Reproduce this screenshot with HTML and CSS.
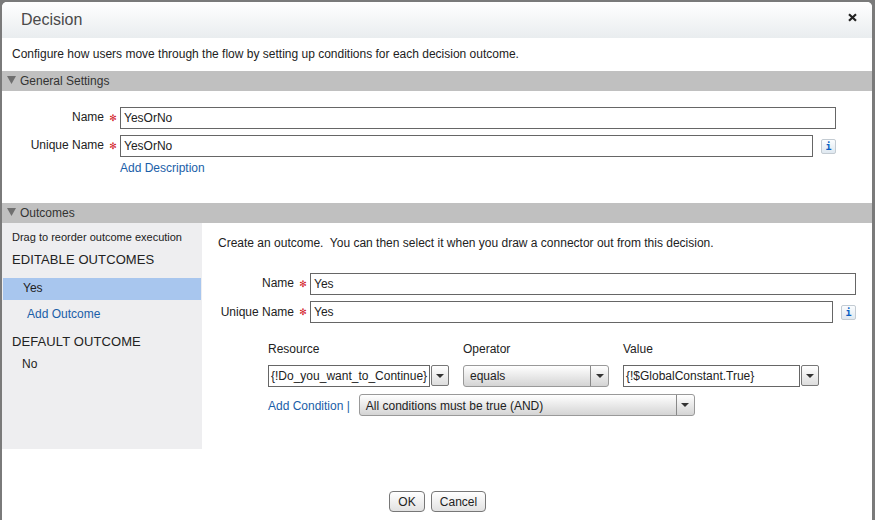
FILE: index.html
```html
<!DOCTYPE html>
<html lang="en">
<head>
<meta charset="utf-8">
<title>Decision</title>
<link rel="stylesheet" href="styles.css">
</head>
<body>
<div class="dialog">
  <header class="dialog-head">
    <h1 class="dialog-title">Decision</h1>
    <svg class="close" width="9" height="9" viewBox="0 0 9 9"><path d="M1 1.2 8 7.8M8 1.2 1 7.8" stroke="#222" stroke-width="2.2" fill="none"/></svg>
  </header>
  <p class="intro">Configure how users move through the flow by setting up conditions for each decision outcome.</p>

  <div class="section-bar">
    <svg class="twisty" width="9" height="8" viewBox="0 0 9 8"><path d="M0 0H9L4.5 8Z" fill="#6f6f6f"/></svg>
    <span>General Settings</span>
  </div>
  <div class="general">
    <div class="row">
      <span class="label general-label">Name</span><span class="req">✻</span>
      <div class="input w-716">YesOrNo</div>
    </div>
    <div class="row row-second">
      <span class="label general-label">Unique Name</span><span class="req">✻</span>
      <div class="input w-693">YesOrNo</div>
      <span class="info">i</span>
    </div>
    <a class="link add-desc">Add Description</a>
  </div>

  <div class="section-bar">
    <svg class="twisty" width="9" height="8" viewBox="0 0 9 8"><path d="M0 0H9L4.5 8Z" fill="#6f6f6f"/></svg>
    <span>Outcomes</span>
  </div>
  <div class="outcomes">
    <aside class="side">
      <div class="side-hint">Drag to reorder outcome execution</div>
      <div class="side-title">EDITABLE OUTCOMES</div>
      <div class="side-selected">Yes</div>
      <a class="link side-add">Add Outcome</a>
      <div class="side-title side-title-default">DEFAULT OUTCOME</div>
      <div class="side-item">No</div>
    </aside>
    <main class="detail">
      <p class="detail-intro">Create an outcome.&nbsp; You can then select it when you draw a connector out from this decision.</p>
      <div class="row">
        <span class="label detail-label">Name</span><span class="req">✻</span>
        <div class="input w-546">Yes</div>
      </div>
      <div class="row row-detail-second">
        <span class="label detail-label">Unique Name</span><span class="req">✻</span>
        <div class="input w-523">Yes</div>
        <span class="info">i</span>
      </div>
      <div class="condition">
        <div class="col col-resource">
          <div class="col-label">Resource</div>
          <div class="combo">
            <div class="input combo-input w-162">{!Do_you_want_to_Continue}</div>
            <span class="combo-btn"><i class="caret"></i></span>
          </div>
        </div>
        <div class="col col-operator">
          <div class="col-label">Operator</div>
          <div class="select w-146"><span class="select-text">equals</span><span class="select-arrow"><i class="caret"></i></span></div>
        </div>
        <div class="col">
          <div class="col-label">Value</div>
          <div class="combo">
            <div class="input combo-input w-177">{!$GlobalConstant.True}</div>
            <span class="combo-btn"><i class="caret"></i></span>
          </div>
        </div>
      </div>
      <div class="logic">
        <a class="link">Add Condition |</a>
        <div class="select select-logic w-336"><span class="select-text">All conditions must be true (AND)</span><span class="select-arrow"><i class="caret"></i></span></div>
      </div>
    </main>
  </div>
  <footer class="foot">
    <button class="btn btn-ok" type="button">OK</button>
    <button class="btn btn-cancel" type="button">Cancel</button>
  </footer>
</div>
</body>
</html>
```
FILE: styles.css
```css
* { box-sizing: border-box; }
html, body { margin: 0; height: 100%; }
body {
  width: 875px;
  height: 520px;
  overflow: hidden;
  background: #7a7a7a;
  padding: 2px 3px 0 2px;
  font-family: "Liberation Sans", Arial, sans-serif;
  font-size: 12px;
  color: #222;
}
.dialog {
  height: 518px;
  background: #fff;
  border-radius: 5px 5px 0 0;
  display: flex;
  flex-direction: column;
}
.dialog-head {
  height: 36px;
  flex: none;
  display: flex;
  align-items: center;
  justify-content: space-between;
  padding: 0 15px 0 19px;
  background: linear-gradient(#fff, #e9edef);
  border-radius: 5px 5px 0 0;
}
.dialog-title {
  margin: 0;
  font-size: 16px;
  font-weight: 400;
  color: #4a4a4a;
}
.close { margin-top: -6px; }
.intro {
  margin: 0;
  height: 33px;
  padding: 9px 0 0 10px;
  line-height: 15px;
}
.section-bar {
  height: 20px;
  flex: none;
  background: #c0c0c0;
  display: flex;
  align-items: center;
  gap: 4px;
  padding-left: 5px;
  color: #333;
}
.twisty { margin-top: -3px; }
.general { height: 112px; padding-top: 16px; flex: none; }
.row { display: flex; align-items: center; height: 22px; }
.row-second { margin-top: 6px; }
.label { text-align: right; flex: none; }
.general-label { width: 102px; padding-bottom: 3px; }
.row-second .general-label { padding-bottom: 2px; }
.detail-label { width: 76px; padding-bottom: 2px; }
.row-detail-second .detail-label { padding-bottom: 1px; }
.req {
  flex: none;
  width: 16px;
  padding-left: 2px;
  text-align: center;
  color: #d0101a;
  font-family: "DejaVu Sans", sans-serif;
  font-size: 9px;
  line-height: 22px;
}
.input {
  flex: none;
  height: 22px;
  border: 1px solid #666;
  background: #fff;
  padding: 0 3px;
  line-height: 20px;
  font-size: 12px;
  color: #222;
  white-space: nowrap;
  overflow: hidden;
}
.w-716 { width: 716px; }
.w-693 { width: 693px; }
.w-546 { width: 546px; }
.w-523 { width: 523px; }
.w-162 { width: 162px; }
.w-177 { width: 177px; }
.w-146 { width: 146px; }
.w-336 { width: 336px; }
.info {
  flex: none;
  width: 15px;
  height: 15px;
  margin-left: 8px;
  border: 1px solid #c3cbd2;
  border-radius: 2px;
  background: linear-gradient(#fbfdff, #dfe8f0);
  color: #0a5fc4;
  font: 700 10px/13px "DejaVu Sans Mono", monospace;
  text-align: center;
}
.link { color: #1a5ea8; }
.add-desc { display: block; margin: 4px 0 0 118px; line-height: 14px; }
.outcomes { display: flex; flex: 0 0 226px; }
.side {
  width: 200px;
  flex: none;
  background: #eeeef0;
  padding-top: 7px;
}
.side-hint { padding-left: 10px; font-size: 11px; line-height: 14px; }
.side-title {
  padding-left: 10px;
  margin-top: 8px;
  font-size: 13px;
  letter-spacing: .1px;
  line-height: 16px;
  color: #222;
}
.side-selected {
  margin: 10px 1px 0 1px;
  height: 22px;
  background: #a8c6ee;
  padding-left: 20px;
  line-height: 20px;
}
.side-add { display: block; margin: 7px 0 0 25px; line-height: 14px; }
.side-title-default { margin-top: 13px; }
.side-item { padding-left: 20px; margin-top: 7px; line-height: 14px; }
.detail { flex: 1; padding-left: 16px; }
.detail-intro { margin: 0; height: 50px; padding-top: 13px; line-height: 15px; }
.row-detail-second { margin-top: 6px; }
.condition { display: flex; margin: 19px 0 0 50px; }
.col-label { line-height: 14px; margin-bottom: 9px; height: 14px; }
.col-resource { width: 195px; }
.col-operator { width: 160px; }
.combo { display: flex; align-items: flex-start; gap: 1px; }
.combo-input { padding: 0 2px; }
.combo-btn {
  width: 18px;
  height: 21px;
  border: 1px solid #777;
  border-radius: 2px;
  background: linear-gradient(#fff, #ddd);
  display: flex;
  align-items: center;
  justify-content: center;
}
.caret {
  width: 0;
  height: 0;
  border-left: 4px solid transparent;
  border-right: 4px solid transparent;
  border-top: 4px solid #333;
}
.select {
  height: 22px;
  border: 1px solid #999;
  border-radius: 3px;
  background: linear-gradient(#fff, #d4d4d4);
  display: flex;
  align-items: center;
  justify-content: space-between;
}
.select-text { padding-left: 6px; }
.select-logic .select-text { padding-top: 2px; }
.select-arrow {
  width: 18px;
  height: 20px;
  border-left: 1px solid #888;
  display: flex;
  align-items: center;
  justify-content: center;
}
.logic { display: flex; align-items: center; margin: 7px 0 0 50px; gap: 9px; }
.logic .link { padding-top: 1px; }
.foot {
  flex: 1;
  display: flex;
  justify-content: center;
  gap: 6px;
  padding: 42px 0 0 1px;
}
.btn {
  height: 21px;
  padding: 0;
  border: 1px solid #777;
  border-radius: 4px;
  background: linear-gradient(#fff, #e2e2e2);
  font: 12px "Liberation Sans", Arial, sans-serif;
  color: #222;
}
.btn-ok { width: 36px; }
.btn-cancel { width: 55px; }
```
